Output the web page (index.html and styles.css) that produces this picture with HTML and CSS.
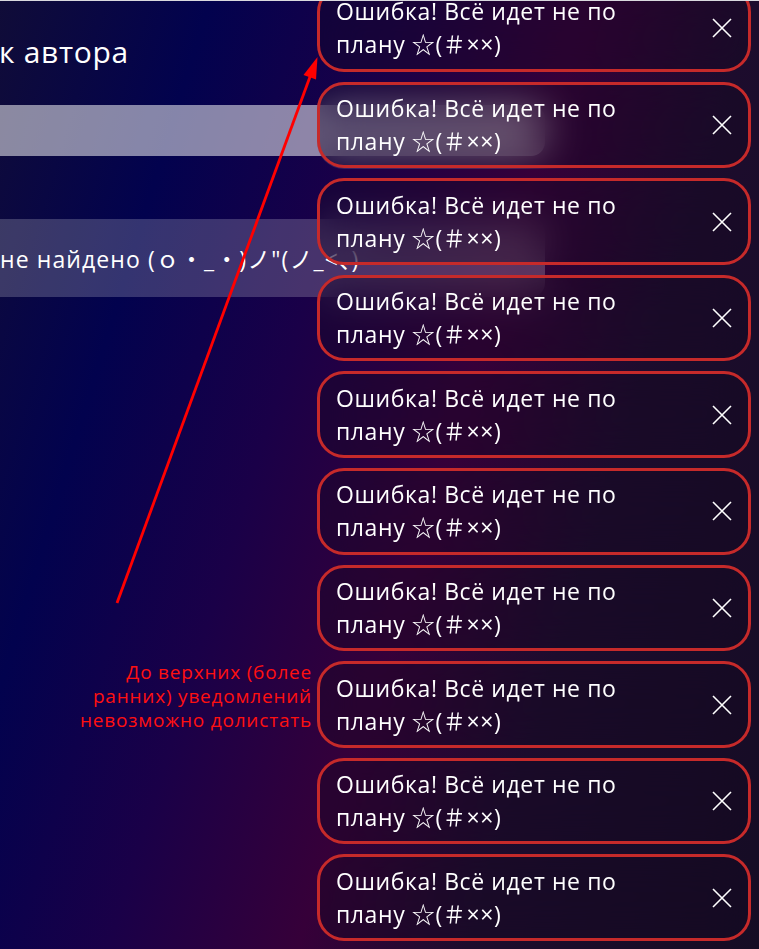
FILE: index.html
```html
<!DOCTYPE html>
<html lang="ru">
<head>
<meta charset="utf-8">
<title>Поиск автора</title>
<link rel="stylesheet" href="styles.css">
</head>
<body>
<main class="search">
  <h1 class="search-title">к автора</h1>
  <div class="search-input"></div>
  <div class="search-result">не найдено (ｏ・_・)ノ"(ノ_&lt;、)</div>
</main>

<section class="toasts">
  <div class="toast"><span class="toast-msg">Ошибка! Всё идет не по плану ☆(＃××)</span><button class="toast-close"><svg viewBox="0 0 20 20"><path d="M1 1L19 19M19 1L1 19"/></svg></button></div>
  <div class="toast"><span class="toast-msg">Ошибка! Всё идет не по плану ☆(＃××)</span><button class="toast-close"><svg viewBox="0 0 20 20"><path d="M1 1L19 19M19 1L1 19"/></svg></button></div>
  <div class="toast"><span class="toast-msg">Ошибка! Всё идет не по плану ☆(＃××)</span><button class="toast-close"><svg viewBox="0 0 20 20"><path d="M1 1L19 19M19 1L1 19"/></svg></button></div>
  <div class="toast"><span class="toast-msg">Ошибка! Всё идет не по плану ☆(＃××)</span><button class="toast-close"><svg viewBox="0 0 20 20"><path d="M1 1L19 19M19 1L1 19"/></svg></button></div>
  <div class="toast"><span class="toast-msg">Ошибка! Всё идет не по плану ☆(＃××)</span><button class="toast-close"><svg viewBox="0 0 20 20"><path d="M1 1L19 19M19 1L1 19"/></svg></button></div>
  <div class="toast"><span class="toast-msg">Ошибка! Всё идет не по плану ☆(＃××)</span><button class="toast-close"><svg viewBox="0 0 20 20"><path d="M1 1L19 19M19 1L1 19"/></svg></button></div>
  <div class="toast"><span class="toast-msg">Ошибка! Всё идет не по плану ☆(＃××)</span><button class="toast-close"><svg viewBox="0 0 20 20"><path d="M1 1L19 19M19 1L1 19"/></svg></button></div>
  <div class="toast"><span class="toast-msg">Ошибка! Всё идет не по плану ☆(＃××)</span><button class="toast-close"><svg viewBox="0 0 20 20"><path d="M1 1L19 19M19 1L1 19"/></svg></button></div>
  <div class="toast"><span class="toast-msg">Ошибка! Всё идет не по плану ☆(＃××)</span><button class="toast-close"><svg viewBox="0 0 20 20"><path d="M1 1L19 19M19 1L1 19"/></svg></button></div>
  <div class="toast"><span class="toast-msg">Ошибка! Всё идет не по плану ☆(＃××)</span><button class="toast-close"><svg viewBox="0 0 20 20"><path d="M1 1L19 19M19 1L1 19"/></svg></button></div>
</section>

<div class="note">До верхних (более<br>ранних) уведомлений<br>невозможно долистать</div>

<svg class="arrow" viewBox="0 0 759 949">
  <line x1="117" y1="603" x2="311" y2="74"/>
  <polygon points="317.5,57 303.5,75 316,79.5"/>
</svg>
</body>
</html>
```

FILE: styles.css
```css
html, body {
  margin: 0;
  padding: 0;
}

body {
  width: 759px;
  height: 949px;
  overflow: hidden;
  font-family: "Open Sans", "Noto Sans", "Noto Sans CJK JP", "DejaVu Sans", sans-serif;
  color: #ffffff;
  background: linear-gradient(107deg, #100c38 0%, #02024e 20%, #1a0048 38%, #360039 56%, #1d0c2d 72%, #150c24 100%);
}

body::before {
  content: "";
  position: fixed;
  left: 0;
  right: 0;
  top: 0;
  height: 1px;
  background: #d9d9de;
  z-index: 20;
}

.search {
  display: flex;
  flex-direction: column;
}

.search-title {
  margin: 33px 0 0 -1px;
  font-size: 30px;
  line-height: 37px;
  font-weight: 500;
  letter-spacing: 0.7px;
}

.search-input {
  margin-top: 35px;
  width: 545px;
  height: 51px;
  background: rgba(255, 255, 255, 0.52);
  border-radius: 0 14px 14px 0;
}

.search-result {
  margin-top: 63px;
  width: 545px;
  height: 78px;
  display: flex;
  align-items: center;
  font-size: 23px;
  letter-spacing: 1.1px;
  white-space: nowrap;
  background: rgba(255, 255, 255, 0.2);
  border-radius: 0 14px 14px 0;
}

.toasts {
  position: fixed;
  right: 8px;
  bottom: 8px;
  width: 434px;
  display: flex;
  flex-direction: column;
  gap: 10px;
  z-index: 5;
}

.toast {
  box-sizing: border-box;
  display: flex;
  align-items: center;
  justify-content: space-between;
  height: 86.6px;
  padding: 0 16px 0 16px;
  border: 3px solid #c62a2a;
  border-radius: 27px;
  background: rgba(20, 10, 32, 0.35);
  -webkit-backdrop-filter: blur(20px);
  backdrop-filter: blur(20px);
}

.toast-msg {
  width: 330px;
  font-size: 23px;
  line-height: 33px;
  letter-spacing: 0.6px;
  color: #ffffff;
}

.toast-close {
  width: 20px;
  height: 20px;
  padding: 0;
  border: 0;
  background: none;
  display: flex;
}

.toast-close svg {
  width: 20px;
  height: 20px;
  fill: none;
  stroke: #ffffff;
  stroke-width: 1.6;
}

.note {
  position: absolute;
  right: 447px;
  top: 660px;
  text-align: right;
  font-size: 19px;
  line-height: 24px;
  letter-spacing: 0.8px;
  color: #ff1010;
  z-index: 6;
}

.arrow {
  position: absolute;
  left: 0;
  top: 0;
  width: 759px;
  height: 949px;
  pointer-events: none;
  z-index: 10;
}

.arrow line {
  stroke: #ff0000;
  stroke-width: 2.8;
}

.arrow polygon {
  fill: #ff0000;
}
```
